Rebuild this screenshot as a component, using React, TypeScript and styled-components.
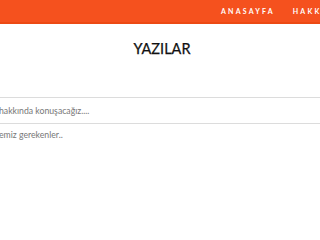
import styled, { createGlobalStyle } from "styled-components";

const GlobalStyle = createGlobalStyle`
  html, body {
    margin: 0;
    padding: 0;
    background: #fff;
    font-family: Lato, "Open Sans", sans-serif;
    overflow: hidden;
  }
`;

const Header = styled.header`
  display: flex;
  align-items: center;
  height: 22px;
  padding-left: 221px;
  background: #f5511e;
  border-bottom: 2px solid #ec4a14;
  white-space: nowrap;
  overflow: hidden;
`;

const NavLink = styled.a`
  flex-shrink: 0;
  margin-right: 18px;
  color: #fff;
  font-size: 7px;
  font-weight: 700;
  letter-spacing: 2.2px;
  text-decoration: none;
`;

const Title = styled.h1`
  margin: 14px 0 0;
  padding-left: 4px;
  text-align: center;
  font-size: 14.5px;
  font-weight: 400;
  line-height: 22px;
  color: #111;
  -webkit-text-stroke: 0.25px #111;
`;

const Form = styled.div`
  display: flex;
  flex-direction: column;
  margin: 37px -20px 0 -4px;
`;

const Field = styled.div<{ $tall?: boolean }>`
  height: ${(p) => (p.$tall ? "90px" : "25px")};
  padding: ${(p) => (p.$tall ? "5px" : "0")} 0 0 3px;
  display: flex;
  align-items: ${(p) => (p.$tall ? "flex-start" : "center")};
  border-top: 1px solid #dcdcdc;
  color: #777;
  font-size: 8.7px;
  white-space: nowrap;
`;

export default function App() {
  return (
    <>
      <GlobalStyle />
      <Header>
        <NavLink href="#">ANASAYFA</NavLink>
        <NavLink href="#">HAKKIMDA</NavLink>
      </Header>
      <Title>YAZILAR</Title>
      <Form>
        <Field>hakkında konuşacağız....</Field>
        <Field $tall>emiz gerekenler..</Field>
      </Form>
    </>
  );
}
